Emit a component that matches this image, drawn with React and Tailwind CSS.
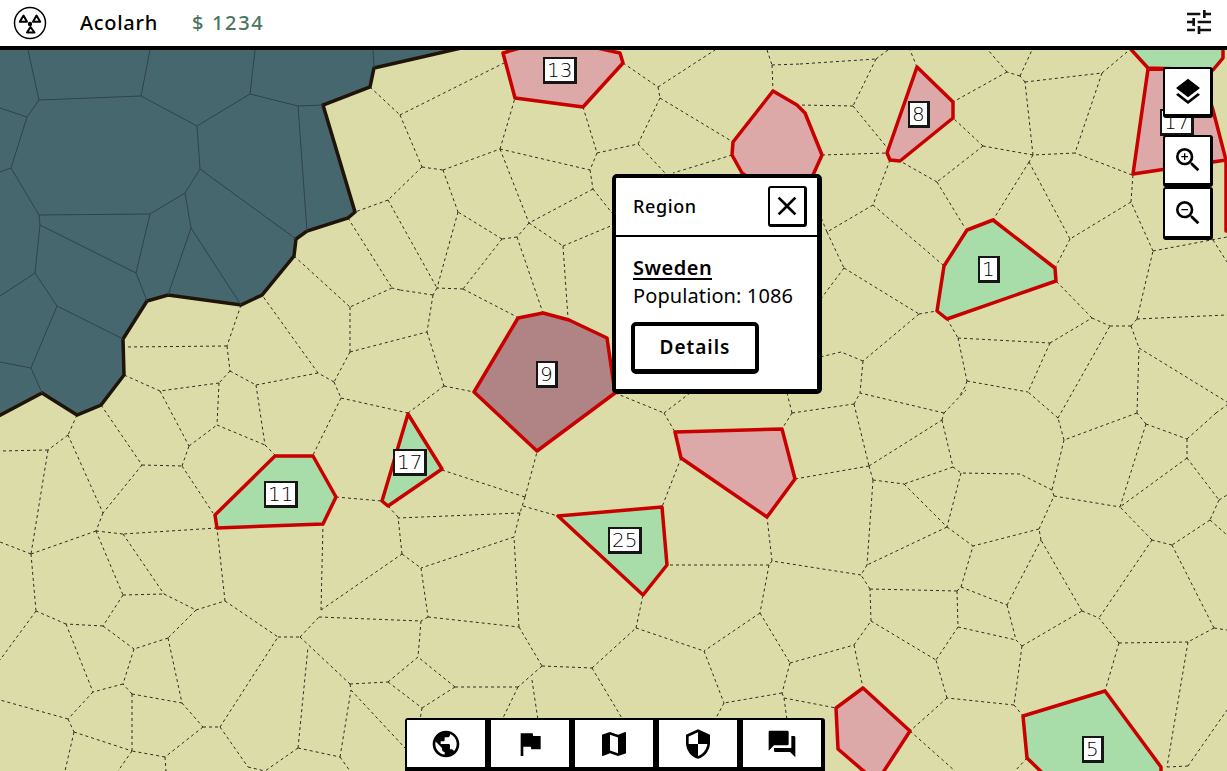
import React from 'react'
import {
  MdPublic,
  MdFlag,
  MdMap,
  MdSecurity,
  MdForum,
  MdLayers,
  MdZoomIn,
  MdZoomOut,
  MdTune,
  MdClose,
} from 'react-icons/md'

const DARK_REGION = '470,46 374,68 370,87 323,105 355,212 348,218 307,231 296,239 294,256 262,295 241,305 168,295 147,301 123,339 124,375 101,405 77,415 42,393 -5,418 -5,40 470,40'

// borders inside the dark country
const DARK_EDGES = [
  [28, 50, 39, 100], [150, 50, 141, 96], [255, 50, 250, 94], [373, 50, 374, 68],
  [39, 100, 141, 96], [141, 96, 197, 126], [250, 94, 197, 126], [250, 94, 298, 106],
  [298, 106, 323, 105], [0, 108, 27, 117], [39, 100, 27, 117], [27, 117, 11, 168],
  [11, 168, 0, 172], [11, 168, 39, 215], [39, 215, 150, 214], [150, 214, 185, 193],
  [185, 193, 200, 169], [197, 126, 200, 169], [200, 169, 296, 239], [298, 106, 307, 231],
  [185, 193, 191, 228], [191, 228, 168, 295], [191, 228, 241, 305], [150, 214, 136, 273],
  [136, 273, 147, 301], [39, 215, 40, 225], [40, 225, 136, 273], [40, 225, 35, 273],
  [35, 273, 0, 296], [35, 273, 57, 306], [57, 306, 123, 339], [57, 306, 31, 368],
  [31, 368, 0, 362], [31, 368, 42, 393],
]

// dashed region borders
const LAND_EDGES = [
  // top middle
  [370, 87, 400, 115], [400, 115, 422, 167], [400, 115, 504, 63], [422, 167, 388, 200],
  [388, 200, 355, 212], [388, 200, 437, 288], [422, 167, 443, 170], [443, 170, 500, 149],
  [443, 170, 458, 212], [500, 149, 515, 98], [500, 149, 590, 170], [500, 149, 529, 223],
  [583, 107, 597, 153], [597, 153, 638, 144], [597, 153, 590, 170], [590, 170, 593, 189],
  [593, 189, 529, 223], [593, 189, 612, 213], [529, 223, 563, 246], [563, 246, 613, 225],
  [529, 223, 517, 237], [517, 237, 502, 239], [502, 239, 458, 212], [502, 239, 463, 289],
  [463, 289, 437, 288], [458, 212, 437, 288], [517, 237, 543, 313], [563, 246, 568, 318],
  [437, 288, 433, 295], [433, 295, 400, 290], [400, 290, 392, 288], [433, 295, 427, 332],
  [463, 289, 517, 317], [623, 63, 658, 87], [658, 87, 660, 98], [660, 98, 733, 142],
  [660, 98, 638, 144], [658, 87, 715, 50], [767, 50, 772, 65], [772, 65, 800, 64],
  [772, 65, 773, 91], [732, 155, 673, 173], [638, 144, 665, 173],
  // left side
  [348, 218, 392, 288], [392, 288, 350, 307], [294, 256, 350, 307], [350, 307, 350, 352],
  [350, 352, 427, 332], [350, 352, 334, 382], [334, 382, 341, 398], [341, 398, 408, 413],
  [427, 332, 444, 386], [444, 386, 474, 392], [444, 386, 408, 413], [341, 398, 313, 455],
  [334, 382, 318, 373], [318, 373, 256, 385], [318, 373, 262, 295], [241, 305, 227, 346],
  [227, 346, 124, 347], [227, 346, 230, 371], [230, 371, 256, 385], [230, 371, 219, 383],
  [219, 383, 160, 391], [160, 391, 124, 375], [219, 383, 217, 425], [256, 385, 265, 445],
  [160, 391, 189, 446], [101, 405, 142, 465], [77, 415, 68, 435], [68, 435, 48, 450],
  [48, 450, 0, 451], [48, 450, 31, 554], [68, 435, 103, 513], [103, 513, 96, 531],
  [96, 531, 31, 554], [31, 554, 0, 542], [31, 554, 36, 611], [96, 531, 123, 534],
  [123, 534, 164, 594], [96, 531, 123, 595], [123, 595, 164, 594], [164, 594, 196, 610],
  [196, 610, 225, 601], [225, 601, 278, 637], [225, 601, 217, 528], [196, 610, 168, 638],
  [168, 638, 134, 649], [123, 595, 103, 626], [103, 626, 66, 624], [66, 624, 36, 611],
  [36, 611, 0, 660], [103, 626, 134, 649], [134, 649, 123, 684], [66, 624, 93, 692],
  [123, 684, 93, 692], [93, 692, 68, 719], [68, 719, 0, 700], [68, 719, 74, 732],
  [74, 732, 65, 771], [74, 732, 132, 751], [132, 751, 118, 771], [132, 751, 132, 694],
  [132, 694, 123, 684], [132, 694, 182, 703], [168, 638, 182, 703], [182, 703, 203, 727],
  [203, 727, 220, 727], [203, 727, 165, 757], [165, 757, 132, 751], [165, 757, 166, 771],
  [220, 727, 278, 637], [220, 727, 248, 767], [248, 767, 265, 771], [298, 748, 265, 771],
  [298, 748, 308, 647], [298, 748, 340, 757], [340, 757, 351, 690], [340, 757, 350, 771],
  [278, 637, 300, 637], [300, 637, 319, 617], [300, 637, 350, 684], [350, 684, 388, 682],
  [350, 684, 351, 690], [388, 682, 418, 657], [388, 682, 422, 708], [351, 690, 405, 748],
  [319, 617, 421, 621], [321, 610, 402, 554], [321, 610, 323, 524], [402, 554, 398, 517],
  [402, 554, 421, 568], [217, 528, 123, 534], [142, 465, 103, 513], [142, 465, 182, 466],
  [182, 466, 189, 446], [182, 466, 213, 513], [189, 446, 217, 425], [217, 425, 265, 445],
  [265, 445, 275, 455], [336, 497, 382, 501], [388, 506, 398, 517],
  // middle
  [442, 470, 525, 497], [525, 497, 537, 452], [525, 497, 520, 513], [523, 506, 558, 516],
  [520, 513, 398, 518], [520, 513, 514, 537], [514, 537, 421, 568], [421, 568, 428, 617],
  [428, 617, 421, 621], [428, 617, 519, 627], [519, 627, 514, 537], [519, 627, 542, 666],
  [542, 666, 592, 668], [592, 668, 636, 628], [636, 628, 643, 595], [636, 628, 704, 651],
  [592, 668, 623, 720], [542, 666, 518, 687], [518, 687, 455, 687], [455, 687, 418, 657],
  [455, 687, 422, 708], [422, 708, 420, 720], [518, 687, 502, 720], [532, 680, 538, 720],
  [421, 621, 418, 657], [615, 393, 664, 413], [664, 413, 675, 432], [664, 413, 690, 393],
  [681, 458, 662, 507],
  // right side
  [792, 413, 782, 429], [792, 413, 854, 404], [792, 413, 787, 393], [854, 404, 860, 393],
  [854, 404, 869, 466], [869, 466, 795, 479], [869, 466, 873, 480], [873, 480, 904, 484],
  [869, 466, 942, 420], [942, 420, 944, 413], [944, 413, 860, 393], [944, 413, 966, 390],
  [942, 420, 953, 467], [953, 467, 961, 473], [953, 467, 904, 484], [904, 484, 947, 527],
  [961, 473, 947, 527], [947, 527, 867, 565], [947, 527, 973, 546], [873, 480, 867, 565],
  [867, 565, 861, 575], [861, 575, 772, 561], [772, 561, 769, 565], [772, 561, 767, 517],
  [769, 565, 667, 565], [769, 565, 760, 613], [760, 613, 704, 651], [704, 651, 724, 703],
  [760, 613, 790, 663], [790, 663, 854, 645], [790, 663, 782, 693], [782, 693, 724, 703],
  [724, 703, 715, 720], [782, 693, 784, 698], [784, 698, 836, 708], [784, 698, 787, 720],
  [854, 645, 871, 621], [854, 645, 863, 688], [871, 621, 870, 589], [870, 589, 861, 575],
  [870, 589, 957, 591], [957, 591, 961, 587], [961, 587, 973, 546], [961, 587, 1007, 605],
  [957, 591, 958, 627], [871, 621, 936, 660], [958, 627, 936, 660], [958, 627, 1016, 640],
  [1016, 640, 1022, 646], [1007, 605, 1016, 640], [1022, 646, 1082, 611], [1022, 646, 1014, 705],
  [1014, 705, 1023, 716], [1014, 705, 947, 698], [947, 698, 936, 660], [947, 698, 910, 731],
  [910, 731, 955, 771], [1082, 611, 1099, 618], [1082, 611, 1041, 540], [1041, 540, 1039, 529],
  [1039, 529, 973, 546], [1039, 529, 1054, 496], [1054, 496, 1052, 490], [1052, 490, 1020, 474],
  [1020, 474, 961, 473], [1007, 605, 1041, 540], [1054, 496, 1120, 507], [1120, 507, 1146, 424],
  [1146, 424, 1137, 413], [1146, 424, 1187, 439], [1187, 439, 1187, 458], [1187, 458, 1120, 507],
  [1187, 458, 1219, 500], [1219, 500, 1210, 520], [1219, 500, 1227, 495], [1210, 520, 1172, 545],
  [1210, 520, 1227, 535], [1172, 545, 1152, 540], [1152, 540, 1120, 507], [1152, 540, 1099, 618],
  [1172, 545, 1214, 628], [1214, 628, 1227, 630], [1214, 628, 1188, 642], [1188, 642, 1119, 643],
  [1119, 643, 1099, 618], [1119, 643, 1105, 691], [1188, 642, 1167, 767], [1167, 767, 1188, 766],
  [1188, 766, 1227, 710], [1137, 413, 1064, 440], [1137, 413, 1139, 348], [1064, 440, 1058, 418],
  [1058, 418, 1028, 392], [1058, 418, 1110, 326], [1064, 440, 1052, 490], [1187, 439, 1216, 413],
  [1216, 413, 1227, 405], [1027, 758, 1015, 771],
  // upper right
  [800, 64, 876, 59], [876, 59, 888, 50], [876, 59, 853, 106], [853, 106, 800, 105],
  [853, 106, 889, 150], [890, 160, 873, 205], [822, 155, 887, 153], [873, 205, 827, 232],
  [873, 205, 943, 265], [827, 232, 820, 215], [827, 232, 844, 268], [844, 268, 820, 300],
  [844, 268, 919, 314], [919, 314, 937, 311], [919, 314, 863, 361], [863, 361, 841, 352],
  [841, 352, 820, 357], [863, 361, 860, 393], [947, 319, 958, 338], [958, 338, 1050, 343],
  [958, 338, 967, 381], [967, 381, 1028, 392], [967, 381, 965, 387], [965, 387, 960, 395],
  [1050, 343, 1092, 318], [1050, 343, 1028, 392], [1092, 318, 1056, 281], [1092, 318, 1110, 326],
  [1110, 326, 1131, 326], [1131, 326, 1137, 319], [1137, 319, 1227, 315], [1131, 326, 1139, 348],
  [1139, 348, 1227, 402], [1137, 319, 1153, 251], [1153, 251, 1227, 237], [1213, 240, 1227, 262],
  [1153, 251, 1131, 202], [1131, 202, 1133, 174], [1131, 202, 1070, 239], [1132, 175, 1075, 153],
  [1075, 153, 1033, 155], [1033, 155, 1029, 162], [1029, 162, 1070, 239], [1029, 162, 993, 220],
  [1070, 239, 1055, 268], [1033, 155, 983, 146], [983, 146, 953, 118], [983, 146, 937, 182],
  [937, 182, 900, 161], [937, 182, 965, 228], [1033, 155, 1025, 82], [1025, 82, 1020, 76],
  [1020, 76, 1007, 72], [1007, 72, 988, 50], [1020, 76, 1032, 50], [1007, 72, 953, 102],
  [1025, 82, 1102, 73], [1102, 73, 1075, 153], [1102, 73, 1127, 52], [917, 67, 910, 50],
]

const REGIONS = [
  { fill: '#a8dca8', points: '1126,44 1148,68 1213,70 1223,58 1223,44' },
  { fill: '#dca8a8', points: '1148,69 1133,174 1226,160 1213,110 1200,70' },
  { fill: '#dca8a8', points: '1226,160 1226,231 1240,231 1240,160' },
  { fill: '#dca8a8', points: '503,53 515,98 583,107 623,63 620,53 597,48 520,48' },
  { fill: '#dca8a8', points: '773,91 797,105 805,113 822,155 813,175 780,200 742,173 732,155 733,142' },
  { fill: '#dca8a8', points: '917,67 953,102 953,118 900,161 890,160 887,153' },
  { fill: '#a8dca8', points: '967,230 993,220 1055,268 1056,281 947,319 937,311 944,266' },
  { fill: '#b08484', points: '518,318 543,313 569,320 607,338 615,393 537,451 474,392' },
  { fill: '#a8dca8', points: '275,456 313,456 336,497 323,524 217,528 215,515' },
  { fill: '#a8dca8', points: '408,414 442,469 388,506 382,501' },
  { fill: '#a8dca8', points: '558,516 662,507 667,565 643,595' },
  { fill: '#dca8a8', points: '675,432 782,429 795,479 767,517 681,458' },
  { fill: '#dca8a8', points: '863,688 836,708 838,749 867,774 882,774 910,731' },
  { fill: '#a8dca8', points: '1023,716 1105,691 1161,767 1161,790 1060,790 1027,758' },
]

const LABELS = [
  { text: '17', pos: 'left-[1160px] top-[59px]' },
  { text: '13', pos: 'left-[543px] top-[7px]' },
  { text: '8', pos: 'left-[908px] top-[51px]' },
  { text: '1', pos: 'left-[978px] top-[206px]' },
  { text: '9', pos: 'left-[536px] top-[311px]' },
  { text: '17', pos: 'left-[393px] top-[399px]' },
  { text: '11', pos: 'left-[264px] top-[431px]' },
  { text: '25', pos: 'left-[608px] top-[477px]' },
  { text: '5', pos: 'left-[1082px] top-[686px]' },
]

const edgePath = (edges) => edges.map(([a, b, c, d]) => `M${a} ${b}L${c} ${d}`).join('')

const BOTTOM_TABS = [MdPublic, MdFlag, MdMap, MdSecurity, MdForum]

const Logo = () => (
  <svg width="34" height="34" viewBox="0 0 34 34" className="shrink-0">
    <circle cx="17" cy="17" r="15.5" fill="white" stroke="black" strokeWidth="1.5" />
    <circle cx="17" cy="18" r="2.2" fill="black" />
    <path d="M10.5 9.5 L6.8 15.8 L14 15.8 Z" fill="white" stroke="black" strokeWidth="2" strokeLinejoin="round" />
    <path d="M23.5 9.5 L20 15.8 L27.2 15.8 Z" fill="white" stroke="black" strokeWidth="2" strokeLinejoin="round" />
    <path d="M17.5 21 L14 26.5 L21.5 26.5 Z" fill="white" stroke="black" strokeWidth="2" strokeLinejoin="round" />
  </svg>
)

const MapLabel = ({ text, pos }) => (
  <div
    className={`absolute ${pos} h-[27px] flex items-center border-2 border-r-[3px] border-b-[3px] border-[#161616] bg-white px-[2px] font-['DejaVu_Sans',sans-serif] text-[20px] font-light leading-none text-black`}
  >
    {text}
  </div>
)

const MapButton = ({ icon: Icon, height }) => (
  <button className={`w-[50px] ${height} flex items-center justify-center bg-white border-2 border-r-[3px] border-b-4 border-black rounded-[3px]`}>
    <Icon size={32} color="black" />
  </button>
)

export default function App() {
  return (
    <div className="h-screen flex flex-col overflow-hidden font-['Noto_Sans',sans-serif] text-black">
      {/* top bar */}
      <header className="h-[50px] shrink-0 flex items-center bg-white border-b-4 border-black pl-[13px] pr-[12px]">
        <Logo />
        <span className="ml-[33px] text-[20px] font-medium tracking-[0.7px]">Acolarh</span>
        <span className="ml-[34px] text-[20px] font-medium tracking-[1.7px] text-[#4a7562]">$ 1234</span>
        <div className="ml-auto flex -mt-[2px]">
          <MdTune size={32} color="#111" />
        </div>
      </header>

      <main className="relative flex-1 bg-[#dcdca8] overflow-hidden">
        <svg className="absolute inset-0 w-full h-full" viewBox="0 50 1227 721">
          <path d={edgePath(LAND_EDGES)} fill="none" stroke="#2e2e22" strokeWidth="1" strokeDasharray="3 3" />
          <polygon points={DARK_REGION} fill="#47676f" stroke="#201408" strokeWidth="3.5" />
          <path d={edgePath(DARK_EDGES)} fill="none" stroke="#2f4350" strokeWidth="1" />
          {REGIONS.map((r) => (
            <polygon key={r.points} points={r.points} fill={r.fill} stroke="#c80000" strokeWidth="3.5" strokeLinejoin="round" />
          ))}
        </svg>

        {LABELS.map((l) => (
          <MapLabel key={l.pos} text={l.text} pos={l.pos} />
        ))}

        {/* map controls */}
        <div className="absolute right-[14px] top-[17px] flex flex-col">
          <MapButton icon={MdLayers} height="h-[51px]" />
          <div className="mt-[17px] flex flex-col">
            <MapButton icon={MdZoomIn} height="h-[52px]" />
            <MapButton icon={MdZoomOut} height="h-[53px]" />
          </div>
        </div>

        {/* region popup */}
        <div className="absolute left-[612px] top-[124px] w-[210px] h-[220px] bg-white border-4 border-r-[5px] border-b-[5px] border-black rounded-[5px]">
          <div className="h-[59px] flex items-center justify-between border-b-2 border-black pl-[17px] pr-[10px]">
            <span className="text-[18px] font-medium tracking-[0.6px]">Region</span>
            <button className="w-[39px] h-[41px] flex items-center justify-center border-2 border-r-[3px] border-b-[3px] border-black rounded-[3px]">
              <MdClose size={32} />
            </button>
          </div>
          <div className="pl-[17px] pt-[21px]">
            <div className="w-fit border-b-2 border-black text-[20px] font-semibold leading-[20px] tracking-[0.5px]">Sweden</div>
            <div className="mt-[3px] text-[20px] leading-[25px] tracking-[0.1px]">Population: 1086</div>
            <button className="mt-[14px] -ml-[2px] w-[128px] h-[52px] border-4 border-b-[5px] border-black rounded-[5px] text-[19px] font-semibold tracking-[1px]">
              Details
            </button>
          </div>
        </div>

        {/* bottom tabs */}
        <nav className="absolute left-[405px] bottom-0 flex gap-[6px] bg-black pt-[2px] pl-[2px] pr-[4px] pb-[4px] rounded-t-[3px]">
          {BOTTOM_TABS.map((Icon, i) => (
            <button key={i} className="w-[78px] h-[47px] flex items-center justify-center bg-white">
              <Icon size={32} color="black" />
            </button>
          ))}
        </nav>
      </main>
    </div>
  )
}
